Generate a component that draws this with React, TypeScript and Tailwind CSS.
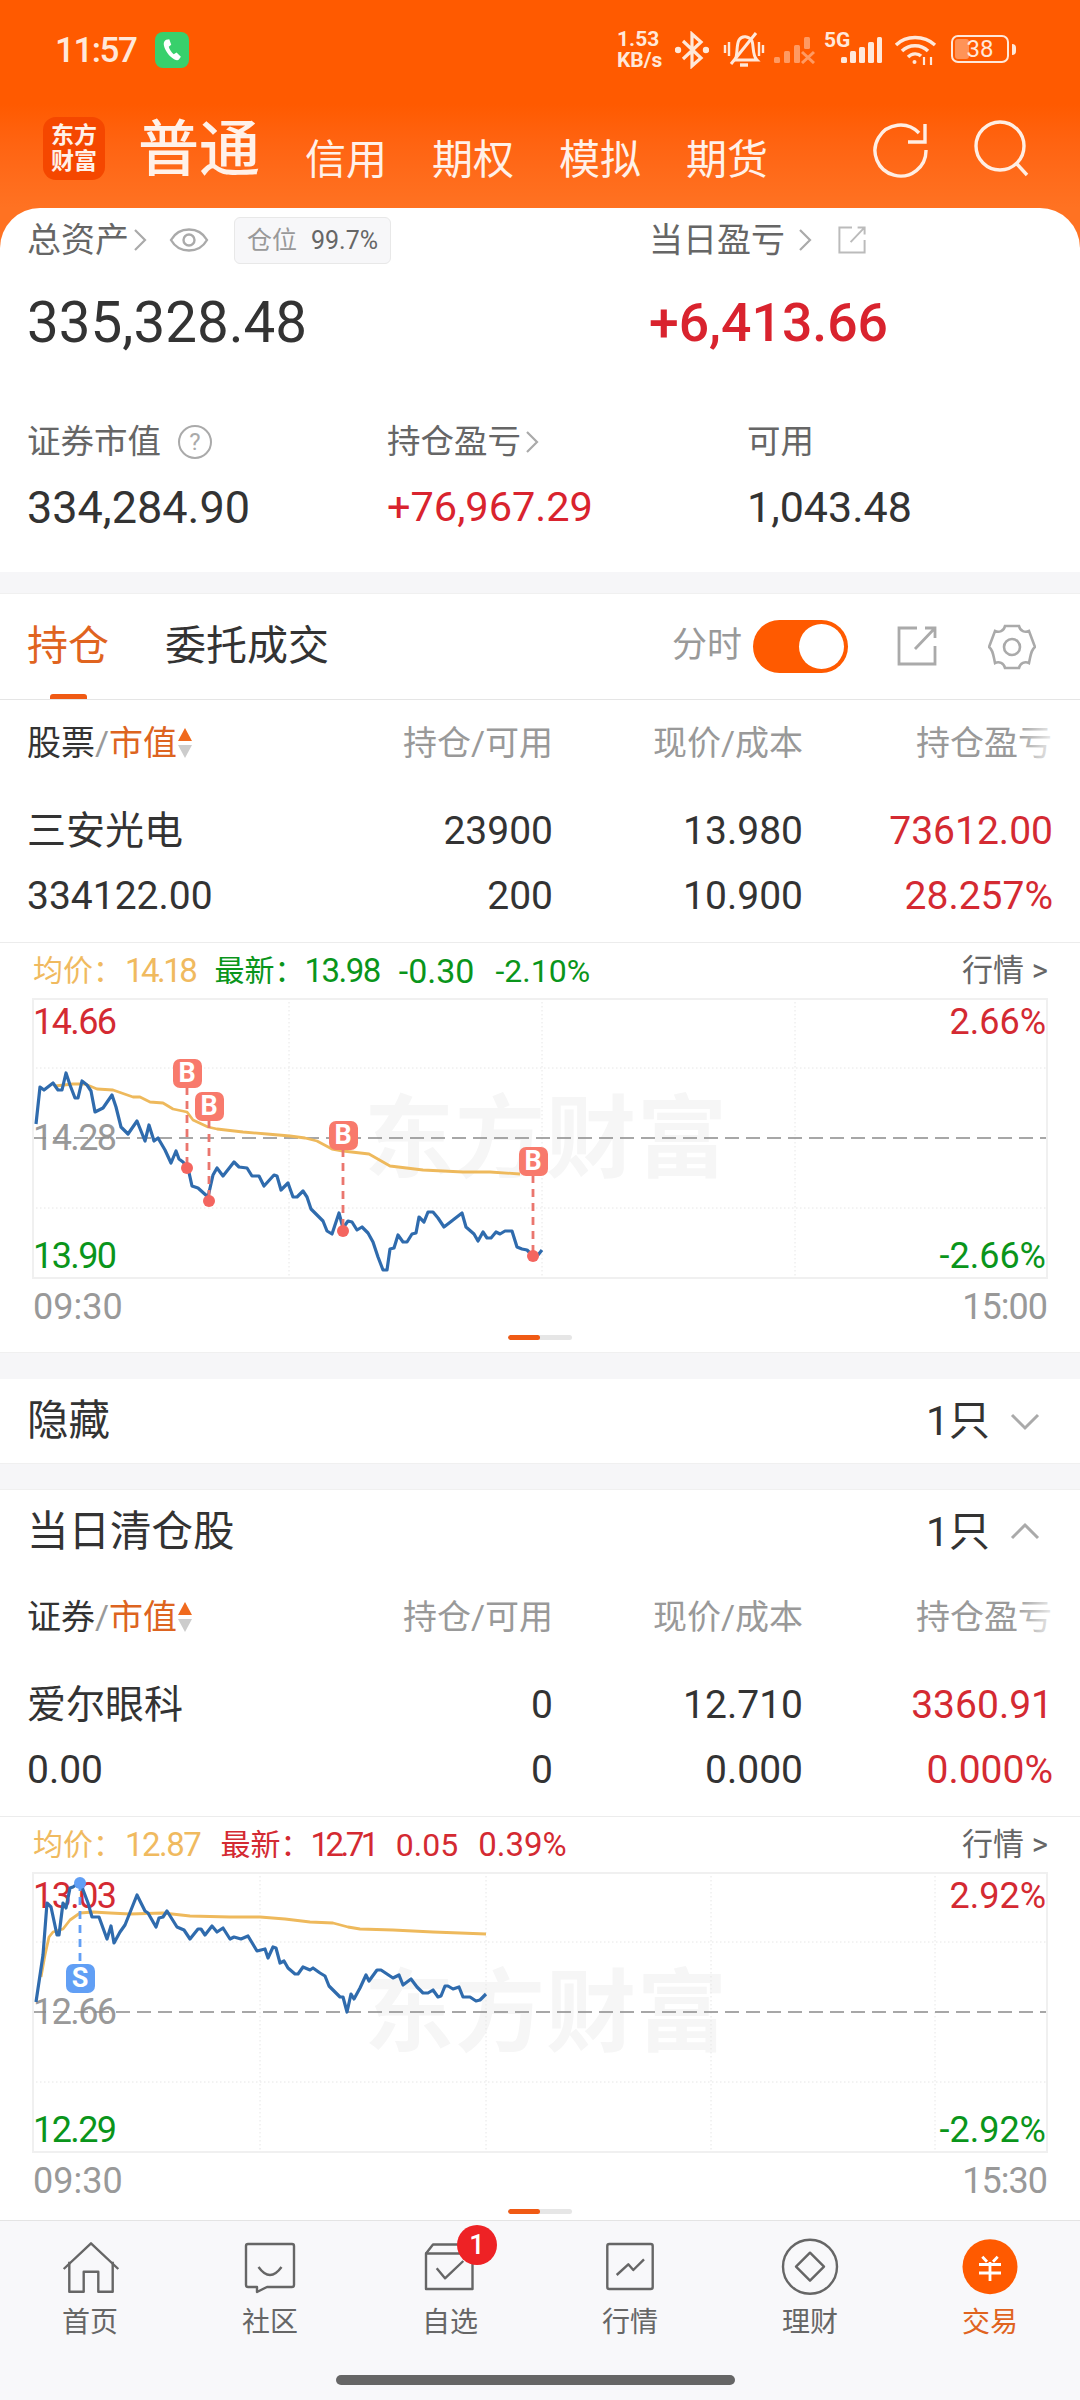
import React from 'react';

const BLUE_ONE = '36,1124 40,1087 44,1090 53,1083 58,1090 62,1090 66,1073 70,1085 75,1098 78,1098 82,1081 87,1085 91,1091 95,1112 103,1108 112,1095 116,1107 121,1127 128,1134 137,1121 145,1141 149,1125 154,1141 158,1138 165,1150 171,1163 176,1151 179,1159 183,1162 188,1168 192,1186 198,1188 208,1197 213,1175 217,1168 223,1176 234,1162 239,1167 247,1168 252,1176 259,1176 264,1186 274,1175 277,1176 281,1190 288,1183 293,1197 297,1197 303,1191 307,1197 311,1209 317,1215 323,1221 327,1231 332,1234 339,1213 343,1228 348,1221 352,1222 357,1230 362,1227 368,1233 373,1242 378,1257 383,1270 387,1270 390,1249 394,1248 398,1235 403,1242 407,1242 412,1234 416,1233 419,1217 424,1222 428,1212 433,1212 438,1218 444,1227 462,1213 466,1227 474,1234 478,1241 483,1232 487,1238 491,1238 496,1232 500,1234 505,1231 512,1231 517,1247 522,1249 527,1250 533,1256 538,1255 542,1250';
const YELLOW_ONE = '55,1086 73,1084 85,1084 97,1089 113,1090 133,1097 140,1097 150,1102 163,1103 173,1109 187,1112 193,1120 208,1127 217,1129 243,1132 267,1134 290,1136 305,1138 317,1141 332,1149 343,1151 369,1154 390,1166 423,1170 463,1172 490,1172 520,1174';
const BLUE_TWO = '36,2002 43,1955 47,1903 51,1907 57,1935 59,1935 63,1903 66,1908 70,1888 73,1887 80,1882 85,1895 88,1903 92,1917 99,1917 107,1939 111,1926 114,1943 120,1932 125,1925 137,1895 145,1911 148,1913 156,1927 159,1918 163,1917 167,1911 177,1927 184,1930 190,1939 198,1929 201,1929 205,1935 212,1926 217,1932 223,1928 230,1939 234,1937 241,1939 248,1936 257,1951 265,1949 268,1958 273,1947 276,1948 280,1963 284,1961 288,1968 295,1974 298,1974 303,1967 310,1970 313,1968 320,1973 325,1976 329,1986 340,1997 343,1997 347,2012 351,1994 354,1999 360,1988 366,1975 369,1981 377,1970 381,1970 387,1974 393,1978 399,1975 403,1985 411,1979 417,1987 423,1993 428,1993 433,1990 438,1997 441,1996 445,1986 448,1986 453,1989 459,1987 463,1997 470,1997 476,2001 480,2000 486,1994';
const YELLOW_TWO = '41,1977 45,1955 49,1937 53,1932 63,1929 70,1920 80,1913 93,1912 110,1913 130,1914 163,1913 190,1916 230,1917 260,1917 285,1919 310,1922 333,1923 348,1927 360,1929 393,1930 433,1932 460,1933 486,1934';

interface Marker {
  label: string;
  x: number;
  y: number;
  dotY: number;
}

interface ChartProps {
  top: number;
  info: React.ReactNode;
  high: string;
  mid: string;
  low: string;
  highPct: string;
  lowPct: string;
  endTime: string;
  gridX: number[];
  blue: string;
  yellow: string;
  markers: Marker[];
}

const MiniChart: React.FC<ChartProps> = (p) => (
  <div className="border-t border-[#ececec] pb-3">
    <div className="flex h-[55px] items-center justify-between pl-[33px] pr-[32px] text-[30px] leading-none">
      <div className="flex items-center">{p.info}</div>
      <span className="text-[31px] text-[#666666]">行情 &gt;</span>
    </div>
    <div className="relative mx-[32px] h-[281px] overflow-hidden border-2 border-[#f0f0f0]">
      <div className="absolute left-[330px] top-[90px] text-[90px] font-bold leading-[100px] tracking-[1px] text-[#f6f6f6]">东方财富</div>
      <span className="absolute -left-[1px] top-[2px] text-[36px] leading-[40px] tracking-[-1.6px] text-[#d42a32]">{p.high}</span>
      <span className="absolute -left-[1px] top-[118px] text-[36px] leading-[40px] tracking-[-1.6px] text-[#999999]">{p.mid}</span>
      <span className="absolute -left-[1px] top-[236px] text-[36px] leading-[40px] tracking-[-1.6px] text-[#0a951b]">{p.low}</span>
      <span className="absolute right-0 top-[2px] text-[36px] leading-[40px] text-[#d42a32]">{p.highPct}</span>
      <span className="absolute right-0 top-[236px] text-[36px] leading-[40px] text-[#0a951b]">{p.lowPct}</span>
      <svg className="absolute -left-[2px] -top-[2px]" width="1016" height="281" viewBox={`32 ${p.top} 1016 281`} fill="none">
        {p.gridX.map((x) => (
          <line key={x} x1={x} x2={x} y1={p.top} y2={p.top + 281} stroke="#e6e6e6" strokeWidth="1" strokeDasharray="1.5 2.5" />
        ))}
        <line x1="32" x2="1048" y1={p.top + 70} y2={p.top + 70} stroke="#e6e6e6" strokeWidth="1" strokeDasharray="1.5 2.5" />
        <line x1="32" x2="1048" y1={p.top + 210} y2={p.top + 210} stroke="#e6e6e6" strokeWidth="1" strokeDasharray="1.5 2.5" />
        <line x1="32" x2="1048" y1={p.top + 140} y2={p.top + 140} stroke="#8a8a8a" strokeWidth="1.5" strokeDasharray="14 7" />
        <polyline points={p.yellow} stroke="#eeb95c" strokeWidth="2.8" strokeLinejoin="round" />
        <polyline points={p.blue} stroke="#2f6bad" strokeWidth="3.2" strokeLinejoin="round" />
        {p.markers.map((m) => {
          const c = m.label === 'B' ? '#ea766e' : '#619ff5';
          const y1 = m.label === 'B' ? m.y + 14 : m.dotY;
          const y2 = m.label === 'B' ? m.dotY : m.y - 14;
          return (
            <g key={m.x}>
              <line x1={m.x} x2={m.x} y1={y1} y2={y2} stroke={c} strokeWidth="2.8" strokeDasharray="8 6" />
              <circle cx={m.x} cy={m.dotY} r="6" fill={m.label === 'B' ? '#f4655f' : '#619ff5'} />
            </g>
          );
        })}
      </svg>
      {p.markers.map((m) => (
        <div
          key={m.x}
          className={`absolute flex h-[29px] w-[29px] items-center justify-center rounded-[7px] text-[27px] font-bold leading-none text-white ${m.label === 'B' ? 'bg-[#f87a6c]' : 'bg-[#619ff5]'}`}
          style={{ left: m.x - 32 - 16.5, top: m.y - p.top - 16.5 }}
        >
          {m.label}
        </div>
      ))}
    </div>
    <div className="flex h-[56px] items-center justify-between px-[33px] text-[36px] leading-none text-[#999999]">
      <span>09:30</span>
      <span className="tracking-[-1px]">{p.endTime}</span>
    </div>
    <div className="ml-[508px] flex h-[5px] w-[64px] overflow-hidden rounded-full bg-[#e6e6e6]">
      <div className="w-[32px] rounded-full bg-[#f05a14]"></div>
    </div>
  </div>
);

const Chevron: React.FC<{ className?: string }> = ({ className }) => (
  <svg className={className} width="14" height="26" viewBox="0 0 14 26" fill="none">
    <path d="M2 3 L12 13 L2 23" stroke="#aaaaaa" strokeWidth="2.2" />
  </svg>
);

const ShareIcon: React.FC<{ size: number; color: string }> = ({ size, color }) => (
  <svg width={size} height={size} viewBox="0 0 40 40" fill="none" stroke={color} strokeWidth="2.8">
    <path d="M20 2 H2 V38 H38 V20" />
    <path d="M18 23 L38 2 M28 2 H38 V12" />
  </svg>
);

const TableHead: React.FC<{ first: string }> = ({ first }) => (
  <div className="relative flex h-[86px] items-center pl-[27px] text-[34px] leading-none text-[#999999]">
    <span className="text-[#333333]">{first}</span>
    <span>/</span>
    <span className="text-[#dd6420]">市值</span>
    <svg className="ml-[1px]" width="14" height="30" viewBox="0 0 14 30">
      <path d="M7 0 L14 13 H0 Z" fill="#f06a1e" />
      <path d="M7 30 L14 17 H0 Z" fill="#cccccc" />
    </svg>
    <span className="absolute right-[527px]">持仓/可用</span>
    <span className="absolute right-[277px]">现价/成本</span>
    <span className="absolute right-[28px]">持仓盈亏</span>
    <div className="absolute right-0 top-0 h-full w-[64px] bg-gradient-to-r from-transparent to-white to-70%"></div>
  </div>
);

interface RowProps {
  name: string;
  value: string;
  a: string;
  b: string;
  c: string;
  d: string;
  e: string;
  f: string;
}

const Holding: React.FC<RowProps> = ({ name, value, a, b, c, d, e, f }) => (
  <div className="mt-[13px] pb-[13px] text-[39px] leading-none text-[#333333]">
    <div className="flex h-[65px] items-center">
      <span className="ml-[27px] w-[301px]">{name}</span>
      <span className="w-[225px] text-right">{a}</span>
      <span className="w-[250px] text-right">{c}</span>
      <span className="w-[250px] text-right text-[#d42a32]">{e}</span>
    </div>
    <div className="flex h-[65px] items-center">
      <span className="ml-[27px] w-[301px]">{value}</span>
      <span className="w-[225px] text-right">{b}</span>
      <span className="w-[250px] text-right">{d}</span>
      <span className="w-[250px] text-right text-[#d42a32]">{f}</span>
    </div>
  </div>
);

const CountRow: React.FC<{ title: string; open?: boolean; height: string }> = ({ title, open, height }) => (
  <div className={`flex items-center justify-between pl-[27px] pr-[40px] text-[41px] leading-none text-[#333333] ${height}`}>
    <span className="text-[41.5px]">{title}</span>
    <div className="flex items-center gap-[20px]">
      <span>1只</span>
      <svg width="30" height="20" viewBox="0 0 30 20" fill="none">
        <path d={open ? 'M2 16 L15 3 L28 16' : 'M2 4 L15 17 L28 4'} stroke="#aaaaaa" strokeWidth="3" />
      </svg>
    </div>
  </div>
);

const StatusBar = () => (
  <div className="relative flex h-[100px] items-center text-[#ffe8da]">
    <span className="ml-[55px] text-[35px] font-medium leading-none tracking-[-1.5px]">11:57</span>
    <div className="absolute left-[155px] top-[32px] flex h-[36px] w-[34px] items-center justify-center rounded-[8px] bg-[#38d06c]">
      <svg width="26" height="26" viewBox="0 0 24 24" fill="#ffffff">
        <path d="M6.6 2.5 L9.5 2 L11.3 7.2 L9 9 C9.6 11.2 11.6 14.6 13.6 16 L16.2 14.4 L20.2 18.2 L18.4 20.8 C17.2 22 14.6 21.6 11.4 18.8 C7.8 15.6 4.6 10.4 4.4 6.6 C4.3 4.8 5.2 3.2 6.6 2.5 Z" />
      </svg>
    </div>
    <div className="absolute left-[617px] top-[29px] flex w-[54px] flex-col text-[21px] font-bold leading-[21px]">
      <span>1.53</span>
      <span>KB/s</span>
    </div>
    <svg className="absolute left-[675px] top-[31px]" width="34" height="38" viewBox="0 0 34 38" fill="none" stroke="currentColor" strokeWidth="3.2">
      <path d="M8 10 L26 27 L17 35 V3 L26 11 L8 28" />
      <circle cx="3" cy="19" r="1.6" fill="currentColor" />
      <circle cx="31" cy="19" r="1.6" fill="currentColor" />
    </svg>
    <svg className="absolute left-[723px] top-[31px]" width="42" height="38" viewBox="0 0 42 38" fill="none" stroke="currentColor" strokeWidth="3">
      <path d="M12 29 C15 24 13 14 16 9 C19 4 26 5 29 10 C31 15 29 24 34 29 Z" />
      <path d="M8 33 L33 2" />
      <path d="M2 14 V22 M6 11 V25 M36 11 V25 M40 14 V22" strokeWidth="2.4" />
      <path d="M17 34 H25" strokeWidth="3.4" />
    </svg>
    <svg className="absolute left-[773px] top-[36px]" width="42" height="28" viewBox="0 0 42 28" fill="#ffe8da" opacity="0.45">
      <rect x="1" y="21" width="6" height="6" rx="1.5" />
      <rect x="11" y="15" width="6" height="12" rx="1.5" />
      <rect x="21" y="9" width="6" height="18" rx="1.5" />
      <rect x="31" y="1" width="6" height="12" rx="1.5" />
      <path d="M29 16 L41 27 M41 16 L29 27" stroke="#ffe8da" strokeWidth="3" />
    </svg>
    <span className="absolute left-[824px] top-[30px] text-[21px] font-bold leading-[21px]">5G</span>
    <svg className="absolute left-[840px] top-[36px]" width="44" height="28" viewBox="0 0 44 28" fill="currentColor">
      <rect x="1" y="21" width="6" height="6" rx="1.5" />
      <rect x="10" y="15" width="6" height="12" rx="1.5" />
      <rect x="19" y="11" width="6" height="16" rx="1.5" />
      <rect x="28" y="6" width="6" height="21" rx="1.5" />
      <rect x="37" y="1" width="5" height="26" rx="1.5" />
    </svg>
    <svg className="absolute left-[894px] top-[34px]" width="44" height="32" viewBox="0 0 44 32" fill="none" stroke="currentColor" strokeWidth="3.4">
      <path d="M2 11 C12 1 30 1 41 11" />
      <path d="M8 17 C15 10 27 10 34 17" />
      <path d="M14 23 C18 19 24 19 27 22" />
      <circle cx="20.5" cy="28" r="2" fill="currentColor" stroke="none" />
      <path d="M30 31 V23 M37 31 V23" strokeWidth="2.2" />
    </svg>
    <div className="absolute left-[951px] top-[35px] flex h-[28px] w-[58px] items-center justify-center rounded-[7px] border-2 border-[#ffe8da]">
      <div className="absolute bottom-[2px] left-[2px] top-[2px] w-[14px] rounded-[3px] bg-[#ffe8da] opacity-40"></div>
      <span className="relative text-[24px] leading-none">38</span>
    </div>
    <div className="absolute left-[1012px] top-[44px] h-[11px] w-[4px] rounded-r-full bg-[#ffe8da]"></div>
  </div>
);

const NavIcon: React.FC<{ children: React.ReactNode }> = ({ children }) => (
  <svg width="60" height="60" viewBox="0 0 60 60" fill="none" stroke="#666666" strokeWidth="2.4" strokeLinejoin="round">
    {children}
  </svg>
);

const tabs = [
  { label: '首页', icon: <NavIcon><path d="M3.7 33 L31 7.3 L58.3 33" /><path d="M9.3 25.7 V55.7 H23.7 V35.7 H38.3 V55.7 H52.7 V25.7" /></NavIcon> },
  { label: '社区', icon: <NavIcon><path d="M8 8 H52 A2 2 0 0 1 54 10 V49 A2 2 0 0 1 52 51 H27 L17 56 V51 H8 A2 2 0 0 1 6 49 V10 A2 2 0 0 1 8 8 Z" /><path d="M18.5 31 Q30 47 41.5 31" /></NavIcon> },
  { label: '自选', icon: <NavIcon><path d="M6 17.5 L13 8.5 H50" /><path d="M6 17.5 H52.5 V53 H6 Z" /><path d="M16.7 32.3 L25 42.3 L43.3 25" /></NavIcon> },
  { label: '行情', icon: <NavIcon><rect x="7.3" y="8" width="45.4" height="45" rx="2" /><path d="M16.7 39 L28.3 28.3 L33.3 34 L44 23.3" /></NavIcon> },
  { label: '理财', icon: <NavIcon><circle cx="30" cy="30.7" r="27" /><path d="M16 30.7 L30 16.7 L44 30.7 L30 44.7 Z" /></NavIcon> },
];

const TabBar = () => (
  <div className="relative h-[180px] shrink-0 border-t border-[#e4e4e4] bg-[#f8f8fa]">
    <div className="grid grid-cols-6 pt-[15px]">
      {tabs.map((t) => (
        <div key={t.label} className="relative flex flex-col items-center">
          {t.icon}
          {t.label === '自选' && (
            <div className="absolute left-[97px] -top-[11px] flex h-[40px] w-[40px] items-center justify-center rounded-full bg-[#ee2225] text-[27px] font-medium leading-none text-white">1</div>
          )}
          <span className="mt-[11px] text-[28px] leading-[32px] text-[#666666]">{t.label}</span>
        </div>
      ))}
      <div className="flex flex-col items-center">
        <svg width="60" height="60" viewBox="0 0 60 60" fill="none" stroke="#ffffff" strokeWidth="2.8">
          <circle cx="30" cy="30.7" r="27.5" fill="#ff5a00" stroke="none" />
          <path d="M22.3 20.7 L27 25.7 M37.7 20.7 L33 25.7 M19 28.5 H41 M19 37 H41 M30 26 V45" />
        </svg>
        <span className="mt-[11px] text-[28px] leading-[32px] text-[#e0641f]">交易</span>
      </div>
    </div>
    <div className="absolute left-[336px] top-[154px] h-[10px] w-[399px] rounded-full bg-[#666666]"></div>
  </div>
);

export default function App() {
  return (
    <div className="flex h-[2400px] w-[1080px] flex-col overflow-hidden bg-[#f6f6f8] font-['Roboto','Noto_Sans_CJK_SC',sans-serif]">
      <div className="min-h-0 flex-1 overflow-hidden">
        <div className="bg-[#ff7222]">
          <div className="bg-gradient-to-b from-[#ff5a00] from-[50%] to-[#ff7222]">
            <StatusBar />
            <div className="relative flex h-[108px] items-end pb-[27px] text-[#fff1e9]">
              <div className="absolute left-[43px] top-[17px] flex h-[63px] w-[62px] flex-col items-center justify-center rounded-[13px] bg-[#f54700] text-[23px] font-bold leading-[26px]">
                <span>东方</span>
                <span>财富</span>
              </div>
              <span className="ml-[138px] text-[61px] font-medium leading-[61px]">普通</span>
              <div className="ml-[45px] flex gap-[45px] text-[41px] leading-[41px]">
                <span>信用</span>
                <span>期权</span>
                <span>模拟</span>
                <span>期货</span>
              </div>
              <svg className="absolute left-[871px] top-[20px]" width="60" height="60" viewBox="0 0 60 60" fill="none" stroke="#ffeee4" strokeWidth="3.4">
                <path d="M48 13 A25.5 25.5 0 1 0 55 30" />
                <path d="M54 4 V22 H37" />
              </svg>
              <svg className="absolute left-[972px] top-[19px]" width="60" height="60" viewBox="0 0 60 60" fill="none" stroke="#ffeee4" strokeWidth="3.4">
                <circle cx="28" cy="27" r="24" />
                <path d="M44 44 L55 56" />
              </svg>
            </div>
          </div>
          <div className="h-[364px] rounded-t-[40px] bg-white pl-[27px]">
            <div className="flex h-[64px] items-center text-[34px] leading-none text-[#666666]">
              <div className="flex w-[622px] items-center">
                <span>总资产</span>
                <Chevron className="ml-[4px]" />
                <svg className="ml-[22px]" width="40" height="26" viewBox="0 0 40 26" fill="none" stroke="#aaaaaa" strokeWidth="2.4">
                  <path d="M2 13 C10 -1 30 -1 38 13 C30 27 10 27 2 13 Z" />
                  <circle cx="20" cy="13" r="5.5" />
                </svg>
                <div className="ml-[25px] flex h-[47px] w-[157px] items-center justify-center gap-[14px] rounded-[6px] border border-[#e8e8e8] bg-[#f7f7f9] text-[25px]">
                  <span className="text-[#999999]">仓位</span>
                  <span className="text-[#666666]">99.7%</span>
                </div>
              </div>
              <span>当日盈亏</span>
              <Chevron className="ml-[13px]" />
              <div className="ml-[26px]">
                <ShareIcon size={28} color="#bbbbbb" />
              </div>
            </div>
            <div className="mt-[15px] flex h-[72px] items-center text-[56.5px] leading-none">
              <span className="w-[622px] text-[#333333]">335,328.48</span>
              <span className="text-[53.5px] font-medium text-[#d9232e]">+6,413.66</span>
            </div>
            <div className="mt-[58px] flex h-[50px] items-center text-[33.5px] leading-none text-[#666666]">
              <div className="flex w-[360px] items-center">
                <span>证券市值</span>
                <div className="ml-[17px] flex h-[34px] w-[34px] items-center justify-center rounded-full border-2 border-[#aaaaaa] text-[24px] text-[#aaaaaa]">?</div>
              </div>
              <div className="flex w-[360px] items-center">
                <span>持仓盈亏</span>
                <Chevron className="ml-[4px]" />
              </div>
              <span>可用</span>
            </div>
            <div className="mt-[9px] flex h-[62px] items-center text-[43px] leading-none text-[#333333]">
              <span className="w-[360px] text-[45px]">334,284.90</span>
              <span className="w-[360px] text-[41.5px] text-[#d9232e]">+76,967.29</span>
              <span>1,043.48</span>
            </div>
          </div>
        </div>

        <div className="mt-[21px] border-y border-[#f0f0f0] bg-white">
          <div className="relative flex h-[106px] items-center border-b border-[#e5e5e5] pl-[27px] text-[41px] leading-none text-[#333333]">
            <span className="text-[#e0641f]">持仓</span>
            <span className="ml-[56px]">委托成交</span>
            <div className="absolute bottom-0 left-[50px] h-[5px] w-[37px] rounded-t-[3px] bg-[#f05a14]"></div>
            <span className="absolute left-[672px] top-[34px] text-[35px] text-[#999999]">分时</span>
            <div className="absolute left-[753px] top-[26px] h-[53px] w-[95px] rounded-full bg-[#ff5a00]">
              <div className="absolute right-[4px] top-[4px] h-[45px] w-[45px] rounded-full bg-white"></div>
            </div>
            <div className="absolute left-[897px] top-[32px]">
              <ShareIcon size={40} color="#aaaaaa" />
            </div>
            <svg className="absolute left-[988px] top-[29px]" width="48" height="48" viewBox="0 0 48 48" fill="none" stroke="#aaaaaa" strokeWidth="2.6">
              <path d="M17 3 H31 C32 8 37 10 41 8 L47 24 C43 27 43 31 41 40 C37 38 32 40 31 45 H17 C16 40 11 38 7 40 C5 31 5 27 1 24 L7 8 C11 10 16 8 17 3 Z" />
              <circle cx="24" cy="24" r="8" />
            </svg>
          </div>
          <TableHead first="股票" />
          <Holding name="三安光电" value="334122.00" a="23900" b="200" c="13.980" d="10.900" e="73612.00" f="28.257%" />
          <MiniChart
            top={998}
            info={
              <>
                <span className="text-[#f0ba5f]">均价：</span>
                <span className="ml-[2px] text-[33px] tracking-[-2.5px] text-[#f0ba5f]">14.18</span>
                <span className="ml-[19px] text-[#0a951b]">最新：</span>
                <span className="text-[33px] tracking-[-1.5px] text-[#0a951b]">13.98</span>
                <span className="ml-[19px] text-[34px] text-[#0a951b]">-0.30</span>
                <span className="ml-[21px] text-[32px] text-[#0a951b]">-2.10%</span>
              </>
            }
            high="14.66"
            mid="14.28"
            low="13.90"
            highPct="2.66%"
            lowPct="-2.66%"
            endTime="15:00"
            gridX={[289, 542, 795]}
            blue={BLUE_ONE}
            yellow={YELLOW_ONE}
            markers={[
              { label: 'B', x: 187, y: 1073, dotY: 1168 },
              { label: 'B', x: 209, y: 1106, dotY: 1201 },
              { label: 'B', x: 343, y: 1135, dotY: 1231 },
              { label: 'B', x: 533, y: 1161, dotY: 1256 },
            ]}
          />
        </div>

        <CountRow title="隐藏" height="mt-[26px] h-[85px] border-b border-[#f0f0f0] bg-white" />

        <div className="mt-[25px] border-t border-[#f0f0f0] bg-white">
          <CountRow title="当日清仓股" open height="h-[84px]" />
          <TableHead first="证券" />
          <Holding name="爱尔眼科" value="0.00" a="0" b="0" c="12.710" d="0.000" e="3360.91" f="0.000%" />
          <MiniChart
            top={1872}
            info={
              <>
                <span className="text-[#f0ba5f]">均价：</span>
                <span className="ml-[2px] text-[33px] tracking-[-1.5px] text-[#f0ba5f]">12.87</span>
                <span className="ml-[20px] text-[#d42a32]">最新：</span>
                <span className="text-[33px] tracking-[-3.5px] text-[#d42a32]">12.71</span>
                <span className="ml-[20px] text-[32px] text-[#d42a32]">0.05</span>
                <span className="ml-[20px] text-[33px] text-[#d42a32]">0.39%</span>
              </>
            }
            high="13.03"
            mid="12.66"
            low="12.29"
            highPct="2.92%"
            lowPct="-2.92%"
            endTime="15:30"
            gridX={[260, 486, 711, 935]}
            blue={BLUE_TWO}
            yellow={YELLOW_TWO}
            markers={[{ label: 'S', x: 80, y: 1978, dotY: 1883 }]}
          />
        </div>
      </div>
      <TabBar />
    </div>
  );
}
